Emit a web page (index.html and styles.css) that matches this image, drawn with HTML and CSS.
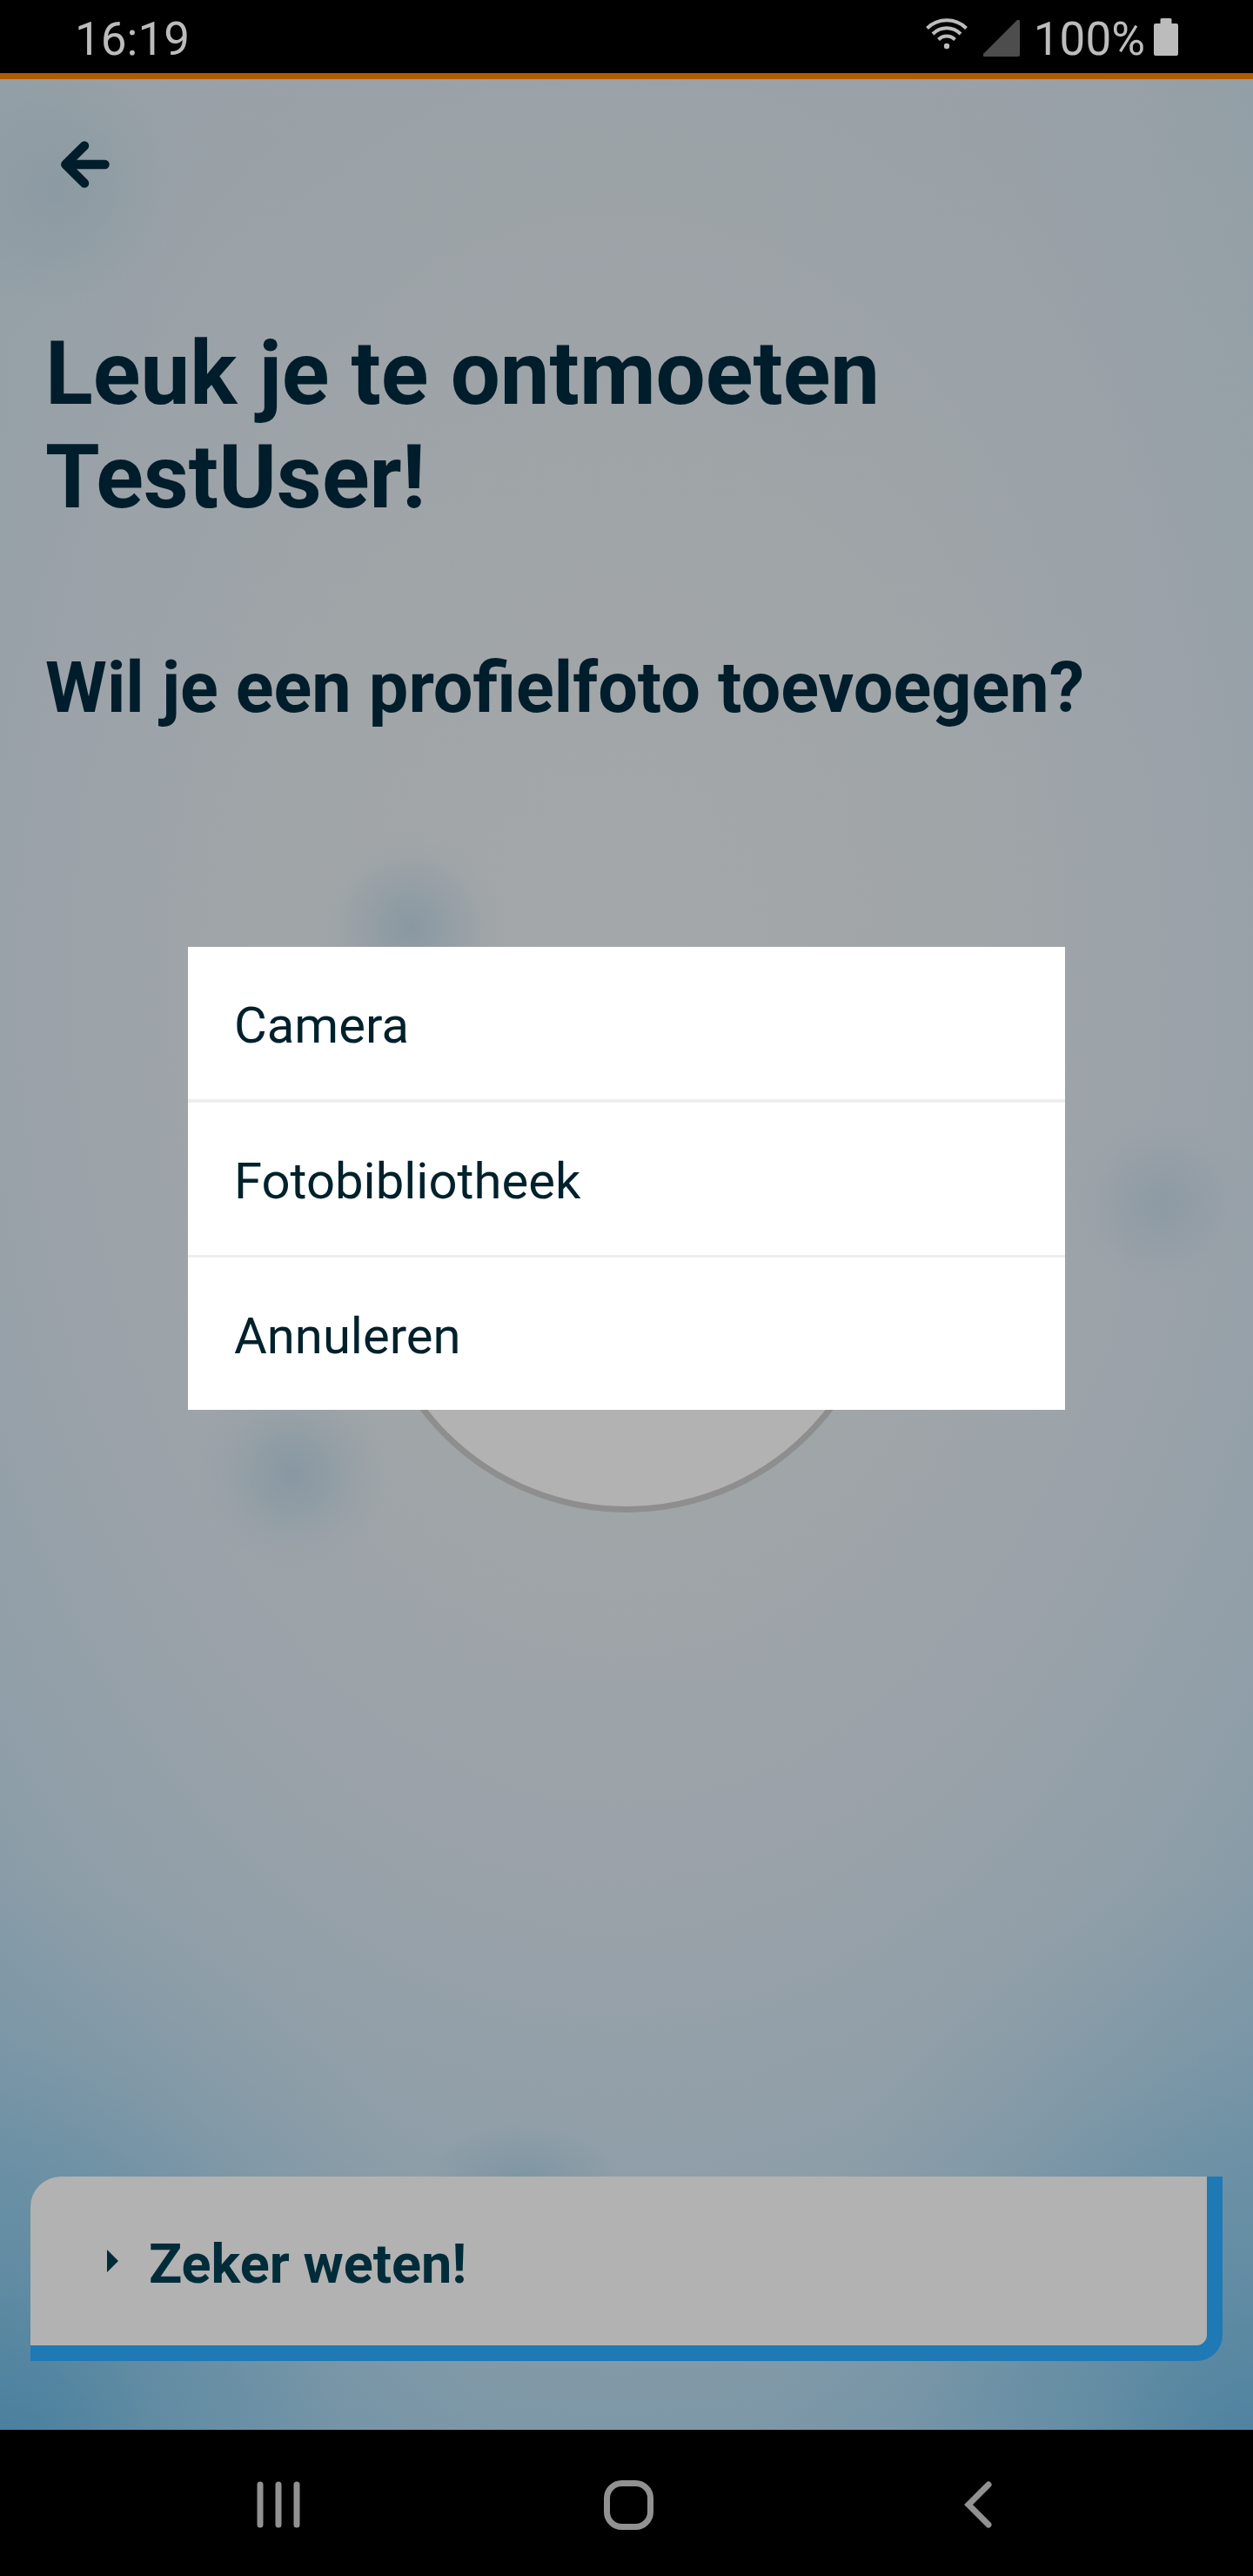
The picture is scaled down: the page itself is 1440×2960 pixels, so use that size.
FILE: index.html
```html
<!DOCTYPE html>
<html lang="nl">
<head>
<meta charset="utf-8">
<title>Profielfoto toevoegen</title>
<link rel="stylesheet" href="styles.css">
</head>
<body>
<div class="phone">
  <header class="status">
    <span class="time">16:19</span>
    <div class="indicators">
      <svg class="wifi" width="48" height="36" viewBox="0 0 48 36" fill="none" stroke="#bcbcbc" stroke-width="4">
        <path d="M1.5 11.5C14-.7 34-.7 46.500 11.500M8 18C17 9 31 9 40 18M14.500 24.500C20 19.300 28 19.300 33.500 24.500"/>
        <circle cx="24" cy="32" r="3.200" fill="#bcbcbc" stroke="none"/>
      </svg>
      <svg class="signal" width="42" height="42" viewBox="0 0 42 42"><path d="M39 0h2q1 0 1 1v39q0 2-2 2H1q-1 0-1-1v-2z" fill="#4d4d4d"/></svg>
      <span class="percent">100%</span>
      <svg class="battery" width="28" height="43" viewBox="0 0 28 43"><path d="M9 0h10q1.500 0 1.500 1.500V6H26q2 0 2 2v33q0 2-2 2H2q-2 0-2-2V8q0-2 2-2h5.500V1.500Q7.500 0 9 0z" fill="#bcbcbc"/></svg>
    </div>
  </header>
  <main class="screen">
    <svg class="back" width="56" height="54" viewBox="0 0 56 54" fill="none" stroke="#001d2b" stroke-width="10.500" stroke-linecap="round" stroke-linejoin="round"><path d="M50.500 27H6M27 5.500L5.300 27 27 48.500"/><path d="M8 27l10-9v18z" fill="#001d2b" stroke="none"/></svg>
    <h1 class="title">Leuk je te ontmoeten<br>TestUser!</h1>
    <h2 class="question">Wil je een profielfoto toevoegen?</h2>
    <div class="avatar"></div>
    <button class="confirm"><span class="marker"></span>Zeker weten!</button>
    <ul class="dialog">
      <li class="option">Camera</li>
      <li class="option">Fotobibliotheek</li>
      <li class="option">Annuleren</li>
    </ul>
  </main>
  <nav class="navbar">
    <svg width="50" height="54" viewBox="0 0 50 54" stroke="#919191" stroke-width="7" stroke-linecap="round"><path d="M4 4v46M25 4v46M46 4v46"/></svg>
    <svg class="home" width="57" height="57" viewBox="0 0 57 57" fill="none" stroke="#919191" stroke-width="7"><rect x="3.500" y="3.500" width="50" height="50" rx="17"/></svg>
    <svg width="32" height="54" viewBox="0 0 32 54" fill="none" stroke="#919191" stroke-width="7" stroke-linecap="round"><path d="M28 4L5 27l23 23"/></svg>
  </nav>
</div>
</body>
</html>
```
FILE: styles.css
```css
* { box-sizing: border-box; }

body {
  margin: 0;
  background: #000;
  font-family: Roboto, "Liberation Sans", sans-serif;
}

.phone {
  display: flex;
  flex-direction: column;
  width: 1440px;
  height: 2960px;
}

.status {
  display: flex;
  justify-content: space-between;
  align-items: center;
  height: 84px;
  padding: 6px 86px 0 86px;
  color: #bcbcbc;
  font-size: 53px;
  line-height: 60px;
}

.indicators { display: flex; align-items: center; }
.wifi { margin: -12px 18px 0 0; }
.signal { margin: -2px 16px 0 0; }
.percent { margin-right: 10px; }
.battery { margin-top: -5px; }

.screen {
  position: relative;
  display: flex;
  flex-direction: column;
  height: 2708px;
  padding: 71px 35px 79px;
  border-top: 7px solid #b05b00;
  color: #001d2b;
  background:
    radial-gradient(circle 110px at 472px 975px, rgba(128,148,160,.75), rgba(128,148,160,.42) 40%, rgba(128,148,160,.1) 75%, rgba(128,148,160,0)),
    radial-gradient(circle 110px at 337px 1602px, rgba(128,148,160,.75), rgba(128,148,160,.42) 40%, rgba(128,148,160,.1) 75%, rgba(128,148,160,0)),
    radial-gradient(circle 100px at 1335px 1292px, rgba(133,149,161,.6), rgba(133,149,161,.35) 45%, rgba(133,149,161,.08) 78%, rgba(133,149,161,0)),
    radial-gradient(circle 140px at 65px 125px, rgba(133,150,160,.6), rgba(133,150,160,.3) 50%, rgba(133,150,160,0)),
    radial-gradient(ellipse 110px 65px at 600px 2415px, rgba(115,143,160,.6), rgba(115,143,160,.25) 60%, rgba(115,143,160,0)),
    radial-gradient(ellipse 560px 700px at 0 2760px, rgba(60,122,156,.9), rgba(80,132,160,.55) 35%, rgba(105,143,165,.2) 72%, rgba(115,148,168,0)),
    radial-gradient(ellipse 560px 700px at 1440px 2760px, rgba(65,124,158,.85), rgba(80,132,160,.5) 35%, rgba(105,143,165,.2) 72%, rgba(115,148,168,0)),
    linear-gradient(rgba(156,162,165,.55), rgba(156,162,165,0) 800px),
    radial-gradient(ellipse 1160px 1760px at 710px 1030px, #a4a7a9, #a0a5a8 35%, #9aa2a9 60%, #8e9ea8 80%, #7896a7);
}

.back { flex: none; margin-left: 35px; }

.title {
  margin: 154px 0 0 17px;
  font-size: 101.250px;
  line-height: 119px;
  font-weight: 700;
}

.question {
  margin: 136px 0 0 17px;
  font-size: 81px;
  line-height: 94px;
  font-weight: 700;
}

.avatar {
  flex: none;
  width: 596px;
  height: 596px;
  margin: 304px auto 0;
  border: 7px solid #8e8e8e;
  border-radius: 50%;
  background: #b2b2b2;
}

.confirm {
  display: flex;
  align-items: center;
  width: 1370px;
  height: 212px;
  margin-top: auto;
  padding: 8px 0 0 88px;
  border: solid #1f79b4;
  border-width: 0 18px 18px 0;
  border-radius: 35px 0 30px 0;
  background: #b2b2b2;
  color: #002c3a;
  font: 700 63px/74px Roboto, "Liberation Sans", sans-serif;
}

.marker {
  margin: -8px 35px 0 0;
  border-left: 13px solid #002c3a;
  border-top: 13px solid transparent;
  border-bottom: 13px solid transparent;
}

.dialog {
  position: absolute;
  left: 216px;
  top: 997px;
  width: 1008px;
  margin: 0;
  padding: 0;
  list-style: none;
  background: #fff;
}

.option {
  height: 179px;
  padding: 56px 53px 0;
  border-bottom: 4px solid #eee;
  color: #00212b;
  font-size: 58px;
  line-height: 68px;
}
.option:nth-child(2) { height: 178px; border-bottom-width: 3px; }
.option:last-child { height: 175px; border: 0; }

.navbar {
  display: flex;
  align-items: center;
  justify-content: space-between;
  height: 168px;
  padding: 4px 300px 0 295px;
}
.home { margin-right: 8px; }
```
